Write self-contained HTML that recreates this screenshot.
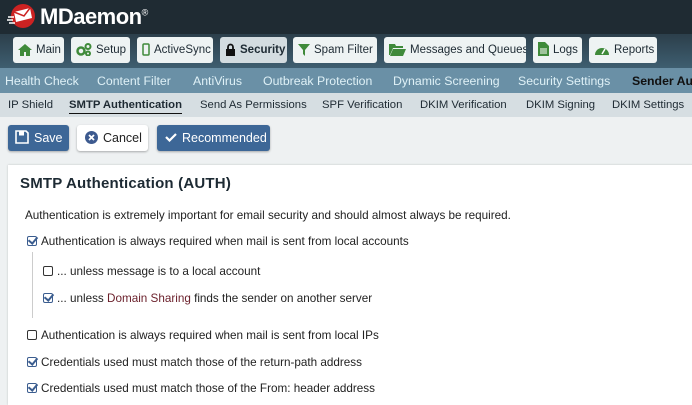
<!DOCTYPE html>
<html><head><style>
*{margin:0;padding:0;box-sizing:border-box}
body{width:692px;height:400px;overflow:hidden;background:#eef1f2;font-family:"Liberation Sans","DejaVu Sans",sans-serif;position:relative}
.top{position:absolute;left:0;top:0;width:692px;height:34px;background:#1f2b33}
.nav{position:absolute;left:0;top:34px;width:692px;height:34px;background:linear-gradient(#2c3f4b,#3e5e70)}
.nb{position:absolute;top:3px;height:26px;background:#eef3f3;border-radius:3px;font-size:11.5px;color:#1d2a33;line-height:26px;padding-left:5px;white-space:nowrap;overflow:hidden}
.nb svg{vertical-align:-3px;margin-right:4px}
.r2{position:absolute;left:0;top:68px;width:692px;height:25px;background:#6a90a6}
.r2 span{position:absolute;top:6px;font-size:12.3px;color:#dff1f7;white-space:nowrap}
.r3{position:absolute;left:0;top:93px;width:692px;height:24px;background:#d6dee2}
.r3 span{position:absolute;top:6px;font-size:11.3px;color:#1e2a33;white-space:nowrap}
.btn{position:absolute;top:125px;height:26px;border-radius:3px;font-size:12.5px;line-height:26px;white-space:nowrap;box-shadow:0 1px 2px rgba(0,0,0,.3)}
.card{position:absolute;left:8px;top:165px;width:700px;height:240px;background:#fff;box-shadow:0 0 2px rgba(0,0,0,.2)}
.t{position:absolute;font-size:11.7px;color:#222;white-space:nowrap}
.cb{display:inline-block;width:10px;height:10px;border:1.3px solid #333;border-radius:2px;vertical-align:-1px;margin-right:4px;position:relative}
.cb.on{border-color:#3b5d8f}
.cb.on:after{content:"";position:absolute;left:2px;top:-2px;width:4px;height:7px;border:solid #3b5d8f;border-width:0 2px 2px 0;transform:rotate(40deg)}
</style></head><body>
<div class="top">
<svg style="position:absolute;left:7px;top:3px" width="32" height="27" viewBox="0 0 32 27"><circle cx="16" cy="13" r="12" fill="#c22"/><path d="M7 9l16-4 2 10-16 4z" fill="#fff"/><path d="M7 9l10 4 6-8" stroke="#c22" fill="none" stroke-width="1.5"/><path d="M1 14h6M0 17h6M2 20h6" stroke="#fff" stroke-width="1.5"/></svg>
<div style="position:absolute;left:40px;top:4px;color:#fff;font-size:22px;font-weight:bold;letter-spacing:-.5px">MDaemon<sup style="font-size:9px;font-weight:normal">®</sup></div>
</div>
<div class="nav">
<div class="nb" style="left:13px;width:51px"><svg width="14" height="12"><path d="M7 0L0 6h2v6h4V8h2v4h4V6h2z" fill="#3f8a3a"/></svg>Main</div>
<div class="nb" style="left:71px;width:59px"><svg width="16" height="13"><circle cx="5" cy="8" r="3.5" fill="none" stroke="#3f8a3a" stroke-width="2.5"/><circle cx="12" cy="3.5" r="2.5" fill="none" stroke="#3f8a3a" stroke-width="2"/><circle cx="12" cy="10.5" r="2" fill="none" stroke="#3f8a3a" stroke-width="2"/></svg>Setup</div>
<div class="nb" style="left:137px;width:76px"><svg width="8" height="13"><rect x="1" y="1" width="6" height="11" rx="1" fill="none" stroke="#3f8a3a" stroke-width="1.5"/></svg>ActiveSync</div>
<div class="nb" style="left:220px;width:67px;background:#d3dce0;font-weight:bold"><svg width="11" height="13"><path d="M3 6V4a2.5 2.5 0 015 0v2" stroke="#111" stroke-width="1.8" fill="none"/><rect x="1" y="6" width="9" height="7" fill="#111"/></svg>Security</div>
<div class="nb" style="left:293px;width:84px"><svg width="12" height="13"><path d="M0 1h12L7 7v6L5 11V7z" fill="#3f8a3a"/></svg>Spam Filter</div>
<div class="nb" style="left:384px;width:142px"><svg width="17" height="13"><path d="M0 1h6l1 2h7v2H4L1 12H0z" fill="#3f8a3a"/><path d="M4 6h13l-3 7H1z" fill="#3f8a3a"/></svg>Messages and Queues</div>
<div class="nb" style="left:533px;width:49px"><svg width="11" height="14"><path d="M0 0h7l4 4v10H0z" fill="#3f8a3a"/><path d="M2 7h7M2 9h7M2 11h7" stroke="#fff"/></svg>Logs</div>
<div class="nb" style="left:589px;width:68px"><svg width="16" height="13"><path d="M1 12a7 7 0 1114 0z" fill="#3f8a3a"/><path d="M8 11l3-5" stroke="#fff" stroke-width="1.5"/></svg>Reports</div>
</div>
<div class="r2"><span style="left:5px">Health Check</span><span style="left:97px">Content Filter</span><span style="left:193px">AntiVirus</span><span style="left:263px">Outbreak Protection</span><span style="left:393px">Dynamic Screening</span><span style="left:518px">Security Settings</span><span style="left:632px;color:#111;font-weight:bold">Sender Au</span></div>
<div class="r3"><span style="left:8px">IP Shield</span><span style="left:69px;font-weight:bold;border-bottom:1.5px solid #111;padding-bottom:2px">SMTP Authentication</span><span style="left:200px">Send As Permissions</span><span style="left:322px">SPF Verification</span><span style="left:420px">DKIM Verification</span><span style="left:526px">DKIM Signing</span><span style="left:612px">DKIM Settings</span></div>
<div class="btn" style="left:8px;width:61px;background:#3d6797;color:#fff;padding-left:7px"><svg width="14" height="14" style="vertical-align:-2px;margin-right:5px"><path d="M1 1h10l2 2v10H1z" fill="none" stroke="#fff" stroke-width="1.6"/><rect x="4" y="1.5" width="5" height="4" fill="#fff"/></svg>Save</div>
<div class="btn" style="left:77px;width:71px;background:#fff;color:#222;padding-left:8px"><svg width="13" height="13" style="vertical-align:-2px;margin-right:5px"><circle cx="6.5" cy="6.5" r="6.5" fill="#3d5a8f"/><path d="M4 4l5 5M9 4l-5 5" stroke="#fff" stroke-width="1.8"/></svg>Cancel</div>
<div class="btn" style="left:157px;width:113px;background:#3d6797;color:#fff;padding-left:8px"><svg width="12" height="10" style="margin-right:5px"><path d="M1 5l3.5 3.5L11 2" stroke="#fff" stroke-width="2.2" fill="none"/></svg>Recommended</div>
<div class="card"></div>
<div class="t" style="left:20px;top:175px;font-size:15px;font-weight:bold;color:#1d2a33;letter-spacing:.2px">SMTP Authentication (AUTH)</div>
<div class="t" style="left:25px;top:209px">Authentication is extremely important for email security and should almost always be required.</div>
<div class="t" style="left:27px;top:235px"><span class="cb on"></span>Authentication is always required when mail is sent from local accounts</div>
<div style="position:absolute;left:32px;top:252px;width:1px;height:66px;background:#ccc"></div>
<div class="t" style="left:43px;top:265px"><span class="cb"></span>... unless message is to a local account</div>
<div class="t" style="left:43px;top:292px"><span class="cb on"></span>... unless <span style="color:#6a1f2a">Domain Sharing</span> finds the sender on another server</div>
<div class="t" style="left:27px;top:329px"><span class="cb"></span>Authentication is always required when mail is sent from local IPs</div>
<div class="t" style="left:27px;top:356px"><span class="cb on"></span>Credentials used must match those of the return-path address</div>
<div class="t" style="left:27px;top:382px"><span class="cb on"></span>Credentials used must match those of the From: header address</div>
</body></html>
